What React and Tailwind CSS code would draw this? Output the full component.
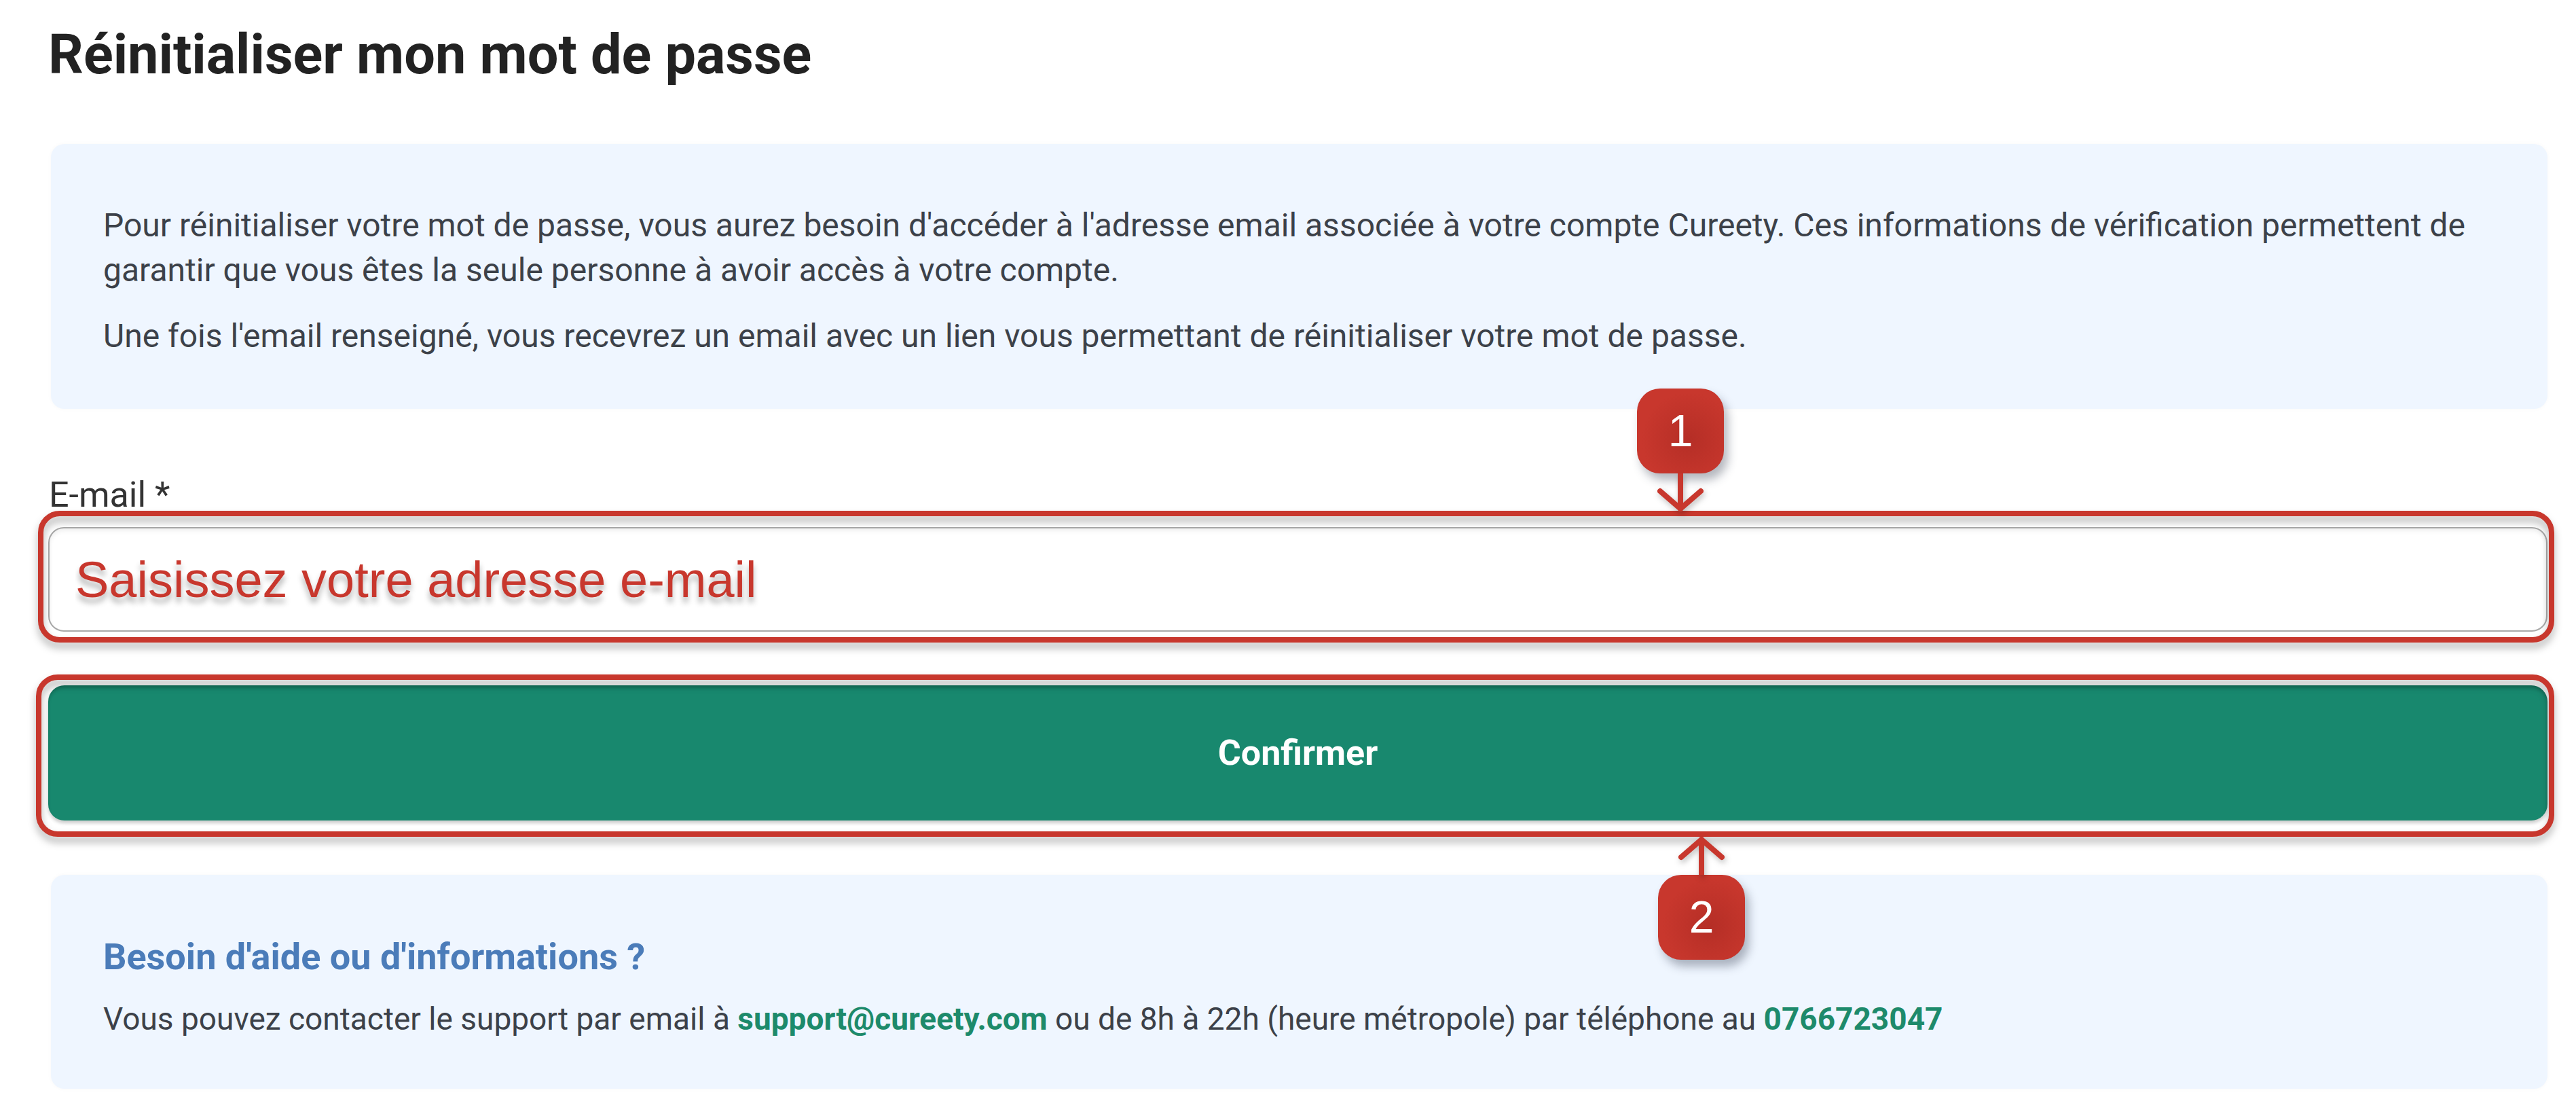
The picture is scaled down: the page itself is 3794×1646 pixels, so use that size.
import React from 'react';

// red callout: numbered badge with an arrow pointing at the field
const Callout = ({ number, direction, className }) => {
  const arrow = (
    <svg width="84" height="56" viewBox="0 0 84 56" className="drop-shadow-[2px_4px_4px_rgba(0,0,0,0.25)]">
      {direction === 'down' ? (
        <g fill="none" stroke="#c8372d" strokeWidth="8" strokeLinecap="round" strokeLinejoin="round">
          <line x1="42" y1="0" x2="42" y2="52" />
          <polyline points="12,26 42,52 72,26" />
        </g>
      ) : (
        <g fill="none" stroke="#c8372d" strokeWidth="8" strokeLinecap="round" strokeLinejoin="round">
          <line x1="42" y1="56" x2="42" y2="4" />
          <polyline points="12,30 42,4 72,30" />
        </g>
      )}
    </svg>
  );

  return (
    <div className={`absolute flex flex-col items-center w-[128px] ${className}`}>
      {direction === 'up' && arrow}
      <div className="w-[128px] h-[125px] rounded-[34px] bg-[#c8372d] bg-[radial-gradient(circle_at_60%_60%,#b52e26,#c8372d_65%)] shadow-[6px_10px_14px_rgba(40,50,70,0.35)] flex items-center justify-center text-white text-[66px] font-['Liberation_Sans',sans-serif]">
        {number}
      </div>
      {direction === 'down' && arrow}
    </div>
  );
};

const App = () => {
  return (
    <div className="min-h-screen bg-white pl-[71px] pr-[42px] pb-[43px] font-['Roboto',sans-serif]">
      <h1 className="pt-[33px] text-[81px] leading-[96px] font-bold text-[#222222]">
        Réinitialiser mon mot de passe
      </h1>

      {/* intro */}
      <div className="mt-[83px] ml-[4px] rounded-[20px] bg-[#eff6ff] shadow-[0_0_6px_rgba(0,0,0,0.03)] pl-[77px] pr-[40px] pt-[87px] pb-[74px] text-[48px] leading-[66px] text-[#3c4149]">
        <p>
          Pour réinitialiser votre mot de passe, vous aurez besoin d'accéder à l'adresse email associée à votre compte Cureety. Ces informations de vérification permettent de garantir que vous êtes la seule personne à avoir accès à votre compte.
        </p>
        <p className="mt-[31px]">
          Une fois l'email renseigné, vous recevrez un email avec un lien vous permettant de réinitialiser votre mot de passe.
        </p>
      </div>

      {/* form */}
      <label htmlFor="email" className="block mt-[101px] pl-[1px] text-[52px] leading-[52px] text-[#333333]">
        E-mail *
      </label>
      <div className="relative mt-[21px]">
        <input
          id="email"
          type="email"
          placeholder="Saisissez votre adresse e-mail"
          className="block w-full h-[154px] rounded-[23px] border-2 border-[#a9a9a9] bg-white pl-[38px] text-[74px] font-['Liberation_Sans',sans-serif] text-[#c8372d] placeholder:text-[#c8372d] [text-shadow:0_8px_8px_rgba(0,0,0,0.3)] shadow-[inset_0_4px_6px_rgba(0,0,0,0.06)] outline-none"
        />
        <div className="absolute -left-[15px] -top-[24px] -right-[10px] -bottom-[16px] rounded-[32px] border-[8px] border-[#c8372d] pointer-events-none drop-shadow-[0_8px_6px_rgba(0,0,0,0.3)]" />
        <Callout number="1" direction="down" className="left-[2340px] -top-[204px]" />
      </div>

      <div className="relative mt-[79px]">
        <button className="w-full h-[199px] rounded-[24px] bg-[#18886e] text-white text-[52px] font-bold shadow-[inset_0_4px_4px_rgba(0,0,0,0.15),0_4px_5px_rgba(0,0,0,0.2)]">
          Confirmer
        </button>
        <div className="absolute -left-[18px] -top-[16px] -right-[10px] -bottom-[24px] rounded-[32px] border-[8px] border-[#c8372d] pointer-events-none drop-shadow-[0_8px_6px_rgba(0,0,0,0.3)]" />
        <Callout number="2" direction="up" className="left-[2371px] top-[223px]" />
      </div>

      {/* help */}
      <div className="mt-[80px] ml-[4px] rounded-[20px] bg-[#eff6ff] shadow-[0_0_6px_rgba(0,0,0,0.03)] pl-[77px] pt-[90px] pb-[70px]">
        <h2 className="text-[54px] leading-[62px] font-bold text-[#4b7cb9]">Besoin d'aide ou d'informations ?</h2>
        <p className="mt-[27px] text-[46px] leading-[66px] text-[#3c4149]">
          Vous pouvez contacter le support par email à{' '}
          <a href="mailto:support@cureety.com" className="font-bold text-[#1d8a6b]">support@cureety.com</a>
          {' '}ou de 8h à 22h (heure métropole) par téléphone au{' '}
          <a href="tel:0766723047" className="font-bold text-[#1d8a6b]">0766723047</a>
        </p>
      </div>
    </div>
  );
};

export default App;
